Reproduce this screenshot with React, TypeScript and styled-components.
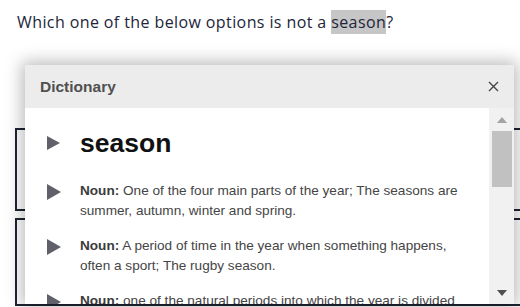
import React from "react";
import styled, { createGlobalStyle } from "styled-components";

const GlobalStyle = createGlobalStyle`
  html, body { margin: 0; padding: 0; background: #ffffff; }
  body { font-family: "Liberation Sans", Arial, sans-serif; }
`;

const Page = styled.div`
  position: relative;
  width: 520px;
  height: 307px;
  overflow: hidden;
  background: #fff;
`;

const Question = styled.p`
  margin: 0;
  padding: 10px 0 0 17px;
  font-family: "Open Sans", "Noto Sans", sans-serif;
  font-size: 16px;
  letter-spacing: 0.4px;
  line-height: 24px;
  color: #22253a;
  white-space: nowrap;
`;

const Highlight = styled.span`
  background: #c6c6c6;
  display: inline-block;
  line-height: 24px;
`;

const Options = styled.div`
  display: flex;
  flex-direction: column;
  gap: 7px;
  margin: 94px 0 0 15px;
  width: 540px;
`;

const OptionBox = styled.div<{ $h: number }>`
  box-sizing: border-box;
  height: ${(p) => p.$h}px;
  border: 2px solid #1d2332;
`;

const Dialog = styled.div`
  position: absolute;
  left: 25px;
  top: 65px;
  width: 489px;
  height: 239px;
  display: flex;
  flex-direction: column;
  background: #fff;
  box-shadow: 0 0 16px 3px rgba(0, 0, 0, 0.28);
`;

const Header = styled.div`
  height: 43px;
  flex: none;
  display: flex;
  align-items: center;
  justify-content: space-between;
  padding: 0 15px 0 15px;
  background: #ececec;
`;

const Title = styled.span`
  font-family: "Liberation Sans", Arial, sans-serif;
  font-weight: bold;
  font-size: 15.5px;
  color: #505050;
`;

const Close = styled.button`
  border: 0;
  background: none;
  padding: 0;
  width: 12px;
  height: 12px;
  display: flex;
  align-items: center;
  justify-content: center;
  cursor: pointer;
`;

const Body = styled.div`
  flex: 1;
  display: flex;
  min-height: 0;
`;

const Content = styled.div`
  flex: 1;
  overflow: hidden;
  padding: 18px 0 0 22px;
  display: flex;
  flex-direction: column;
`;

const Entry = styled.div<{ $gap: number }>`
  display: grid;
  grid-template-columns: 33px 1fr;
  margin-top: ${(p) => p.$gap}px;
  flex: none;
`;

const Marker = styled.div<{ $w: number; $h: number; $top: number }>`
  width: 0;
  height: 0;
  margin-top: ${(p) => p.$top}px;
  border-top: ${(p) => p.$h / 2}px solid transparent;
  border-bottom: ${(p) => p.$h / 2}px solid transparent;
  border-left: ${(p) => p.$w}px solid #5f6069;
`;

const Headword = styled.div`
  font-family: "Liberation Sans", Arial, sans-serif;
  font-weight: bold;
  font-size: 26.5px;
  line-height: 34px;
  color: #111;
`;

const Definition = styled.div`
  font-family: "Liberation Sans", Arial, sans-serif;
  font-size: 13.6px;
  line-height: 20px;
  color: #454545;
  padding-right: 23px;
  b { color: #3a3a3a; }
`;

const Scrollbar = styled.div`
  width: 25px;
  flex: none;
  background: #f1f1f1;
  display: flex;
  flex-direction: column;
  align-items: center;
  padding: 9px 0 8px;
  box-sizing: border-box;
`;

const Arrow = styled.div<{ $down?: boolean; $color: string }>`
  width: 0;
  height: 0;
  border-left: 5px solid transparent;
  border-right: 5px solid transparent;
  ${(p) =>
    p.$down
      ? `border-top: 6px solid ${p.$color};`
      : `border-bottom: 6px solid ${p.$color};`}
`;

const Thumb = styled.div`
  width: 20px;
  height: 56px;
  margin-top: 8px;
  background: #c1c1c1;
`;

const Spacer = styled.div`
  flex: 1;
`;

const defs = [
  "One of the four main parts of the year; The seasons are summer, autumn, winter and spring.",
  "A period of time in the year when something happens, often a sport; The rugby season.",
  "one of the natural periods into which the year is divided by the equinoxes and solstices or atmospheric conditions.",
];

export default function App() {
  return (
    <>
      <GlobalStyle />
      <Page>
        <Question>
          Which one of the below options is not a <Highlight>season</Highlight>?
        </Question>
        <Options>
          <OptionBox $h={83} />
          <OptionBox $h={88} />
        </Options>
        <Dialog>
          <Header>
            <Title>Dictionary</Title>
            <Close aria-label="Close">
              <svg width="11" height="11" viewBox="0 0 11 11">
                <path d="M1 1 L10 10 M10 1 L1 10" stroke="#454545" strokeWidth="1.4" />
              </svg>
            </Close>
          </Header>
          <Body>
            <Content>
              <Entry $gap={0}>
                <Marker $w={13} $h={14} $top={10} />
                <Headword>season</Headword>
              </Entry>
              {defs.map((d, i) => (
                <Entry key={i} $gap={i === 0 ? 21 : 15}>
                  <Marker $w={14} $h={16} $top={3} />
                  <Definition>
                    <b>Noun:</b> {d}
                  </Definition>
                </Entry>
              ))}
            </Content>
            <Scrollbar>
              <Arrow $color="#a3a3a3" />
              <Thumb />
              <Spacer />
              <Arrow $down $color="#505050" />
            </Scrollbar>
          </Body>
        </Dialog>
      </Page>
    </>
  );
}
